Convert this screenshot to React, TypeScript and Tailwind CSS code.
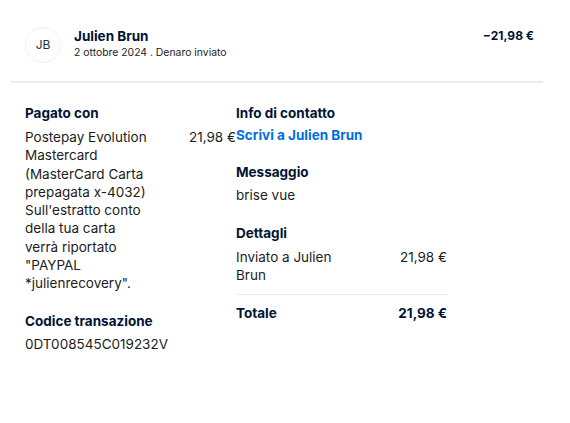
import React from "react";

export default function App() {
  return (
    <div className="w-[570px] h-[423px] bg-white font-['Inter',sans-serif] text-[#1c1c1c]">
      <div className="mx-[11px] w-[532px] flex items-start border-b-2 border-[#ececec] pl-[14px] pr-[9px] pt-[27px] h-[83px]">
        <div className="w-[36px] h-[36px] rounded-full border border-[#f1f1f1] flex items-center justify-center text-[12px] text-[#2c2e2f]">
          JB
        </div>
        <div className="ml-[13px] flex-1 -mt-[1px]">
          <div className="text-[13.5px] leading-[20px] font-bold text-[#001435]">Julien Brun</div>
          <div className="text-[10.4px] leading-[14px] text-[#1c1c1c]">2 ottobre 2024 . Denaro inviato</div>
        </div>
        <div className="text-[12px] leading-[20px] font-bold text-[#001435] -mt-[1px]">−21,98 €</div>
      </div>
      <div className="pl-[25px] pt-[20px] grid grid-cols-[211px_211px] text-[13.5px] leading-[18.3px]">
        <div>
          <div className="font-bold text-[#001435] leading-[20px]">Pagato con</div>
          <div className="mt-[5px] flex">
            <div className="w-[126px]">
              Postepay Evolution Mastercard (MasterCard Carta prepagata x-4032) Sull'estratto conto della tua carta verrà riportato "PAYPAL *julienrecovery".
            </div>
            <div className="ml-auto">21,98 €</div>
          </div>
          <div className="mt-[18px] font-bold text-[#001435] leading-[20px]">Codice transazione</div>
          <div className="mt-[4px]">0DT008545C019232V</div>
        </div>
        <div>
          <div className="font-bold text-[#001435] leading-[20px]">Info di contatto</div>
          <div className="mt-[3px] font-bold text-[#0070e0]">Scrivi a Julien Brun</div>
          <div className="mt-[18px] font-bold text-[#001435] leading-[20px]">Messaggio</div>
          <div className="mt-[4px]">brise vue</div>
          <div className="mt-[18px] font-bold text-[#001435] leading-[20px]">Dettagli</div>
          <div className="mt-[5px] grid grid-cols-2 pb-[10px] border-b border-[#ececec]">
            <div>Inviato a Julien Brun</div>
            <div className="text-right">21,98 €</div>
          </div>
          <div className="mt-[9px] grid grid-cols-2 font-bold text-[#001435]">
            <div>Totale</div>
            <div className="text-right">21,98 €</div>
          </div>
        </div>
      </div>
    </div>
  );
}
